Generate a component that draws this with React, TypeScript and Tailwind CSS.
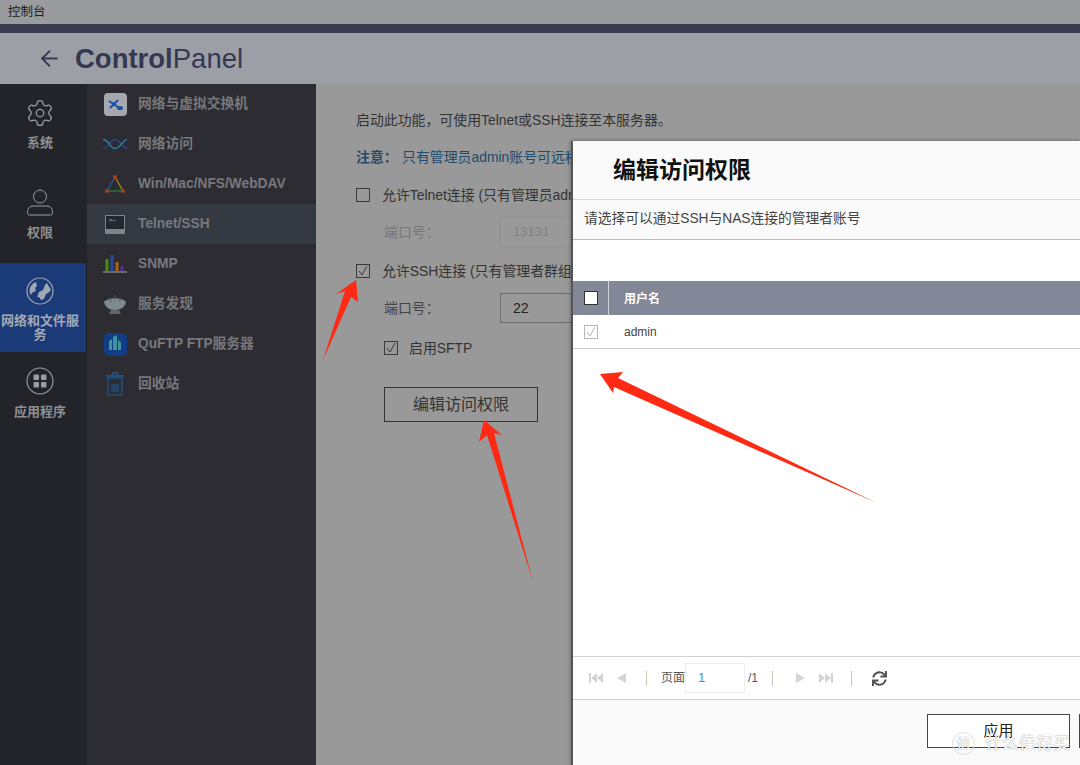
import { ArrowLeft, Settings } from 'lucide-react'
import { FaSync } from 'react-icons/fa'

const font = { fontFamily: '"Liberation Sans", "Noto Sans CJK SC", sans-serif' }

function SwitchIcon() {
  return (
    <div className="flex h-[23px] w-[23px] items-center justify-center rounded-[4px] bg-[#a5a9ae]">
      <svg width="19" height="19" viewBox="0 0 19 19">
        <path d="M3 6l9 6M4 13l8-8" stroke="#1c50a8" strokeWidth="2" />
        <circle cx="8" cy="9" r="2" fill="#1c50a8" />
        <ellipse cx="14" cy="13" rx="3" ry="2" fill="#1c50a8" />
      </svg>
    </div>
  )
}

function WaveIcon() {
  return (
    <svg width="24" height="12" viewBox="0 0 24 12" fill="none">
      <path d="M0 10.500C6 10.500 7 1.500 12 1.500S18 9 24 10.500" stroke="#31468c" strokeWidth="1.300" />
      <path d="M0 1.500C6 1.500 7 10.500 12 10.500S18 4 24 1" stroke="#2a8aa6" strokeWidth="1.300" />
    </svg>
  )
}

function TriangleIcon() {
  return (
    <svg width="22" height="20" viewBox="0 0 22 20" fill="none">
      <path d="M11 3L3 17" stroke="#1f5a9c" strokeWidth="1.400" />
      <path d="M11 3l8 14" stroke="#a8861c" strokeWidth="1.400" />
      <path d="M3 17h16" stroke="#1f7a34" strokeWidth="1.400" />
      <circle cx="11" cy="3" r="2" fill="#a8421c" />
      <circle cx="3" cy="17" r="2" fill="#a8421c" />
      <circle cx="19" cy="17" r="2" fill="#a8421c" />
    </svg>
  )
}

function TerminalIcon() {
  return (
    <div className="flex h-[19px] w-[20px] flex-col rounded-[1px] bg-[#7f848b] p-[1px]">
      <div className="flex h-[13px] items-start bg-[#24272e] px-[3px] text-[6px] leading-[8px] text-[#9a9ea4]">{'>–'}</div>
    </div>
  )
}

function BarsIcon() {
  return (
    <svg width="24" height="20" viewBox="0 0 24 20">
      <rect x="2.500" y="5" width="3" height="12" fill="#4d8a12" />
      <rect x="7.500" y="1" width="3" height="16" fill="#2a4aa0" />
      <rect x="12.500" y="8" width="3" height="9" fill="#a8660e" />
      <rect x="17.500" y="12" width="3" height="5" fill="#5a2a9a" />
      <rect x="0" y="17" width="24" height="2" fill="#686b70" />
    </svg>
  )
}

function DishIcon() {
  return (
    <svg width="24" height="22" viewBox="0 0 24 22">
      <path d="M1 9c4-5 18-5 22 0-1 5-5 8-11 8S2 14 1 9z" fill="#7f8a8c" />
      <path d="M12 2v5M6 5l2 4M18 5l-2 4" stroke="#555a60" strokeWidth="1" />
      <path d="M8 17h8l2 4H6z" fill="#60686c" />
    </svg>
  )
}

function FtpIcon() {
  return (
    <div className="flex h-[23px] w-[23px] items-center justify-center rounded-[5px] bg-[#123c84]">
      <svg width="18" height="20" viewBox="0 0 18 20">
        <path d="M3 7l3-2v11H3zM7 3l4-2v15H7zM12 6l3 2v8h-3z" fill="#3f94a0" />
      </svg>
    </div>
  )
}

function BinIcon() {
  return (
    <svg width="20" height="24" viewBox="0 0 20 24" fill="none">
      <path d="M1 4h18M7 3l1-2h4l1 2" stroke="#1d5c94" strokeWidth="1.400" />
      <path d="M3 6h14v17H3z" stroke="#1d5c94" strokeWidth="1.200" />
      <path d="M6 13h8M6 15h8M6 17h8M6 19h8" stroke="#1d5c94" strokeWidth="1" />
    </svg>
  )
}

function UserIcon() {
  return (
    <svg width="28" height="28" viewBox="0 0 28 28" fill="none" stroke="#9b9da0" strokeWidth="1">
      <circle cx="14" cy="7.500" r="6.500" />
      <path d="M7 17h14c3 0 5.500 2.500 5.500 5.500 0 3-.5 3.500-2 3.500H3.500c-1.500 0-2-.5-2-3.500C1.500 19.500 4 17 7 17z" />
    </svg>
  )
}

function GlobeIcon() {
  return (
    <svg width="28" height="28" viewBox="0 0 28 28">
      <circle cx="14" cy="14" r="13" fill="none" stroke="#9fa6b4" strokeWidth="1.200" />
      <path d="M5 18c-1.500-2-2-5-1-7 1-3 3-5 6-6l1 4-2 2 1 3-3 1z" fill="#9fa6b4" />
      <path d="M11 20l2-5 4-2 2-5 2-2 4 7-3 3-2 1-2 5-3 1-2-3z" fill="#9fa6b4" />
    </svg>
  )
}

function AppsIcon() {
  return (
    <svg width="28" height="28" viewBox="0 0 28 28">
      <circle cx="14" cy="14" r="13" fill="none" stroke="#9b9da0" strokeWidth="1.100" />
      <rect x="7.500" y="7.500" width="5.500" height="5.500" rx="1" fill="#9b9da0" />
      <rect x="15" y="7.500" width="5.500" height="5.500" rx="1" fill="#9b9da0" />
      <rect x="7.500" y="15" width="5.500" height="5.500" rx="1" fill="#9b9da0" />
      <rect x="15" y="15" width="5.500" height="5.500" rx="1" fill="#9b9da0" />
    </svg>
  )
}

function Check({ checked, color = '#3a3a3a' }: { checked?: boolean; color?: string }) {
  return (
    <svg width="14" height="14" viewBox="0 0 14 14" fill="none" className="shrink-0">
      <rect x="0.500" y="0.500" width="13" height="13" stroke={color} />
      {checked && <path d="M3 7l3 4 5-9" stroke={color} strokeWidth="1" />}
    </svg>
  )
}

const menu = [
  { icon: <SwitchIcon />, label: '网络与虚拟交换机' },
  { icon: <WaveIcon />, label: '网络访问' },
  { icon: <TriangleIcon />, label: 'Win/Mac/NFS/WebDAV' },
  { icon: <TerminalIcon />, label: 'Telnet/SSH', active: true },
  { icon: <BarsIcon />, label: 'SNMP' },
  { icon: <DishIcon />, label: '服务发现' },
  { icon: <FtpIcon />, label: 'QuFTP FTP服务器' },
  { icon: <BinIcon />, label: '回收站' },
]

function Pager() {
  const c = '#d4d4d4'
  return (
    <div className="flex h-[44px] shrink-0 items-center border-y border-[#d2d2d2] bg-white pl-[16px] text-[12px] text-[#555]">
      <svg width="14" height="12" viewBox="0 0 14 12" fill={c}>
        <rect x="0" y="1" width="2" height="10" />
        <path d="M8 1v10L2 6zM14 1v10L8 6z" />
      </svg>
      <svg width="10" height="12" viewBox="0 0 10 12" fill={c} className="ml-[13px]">
        <path d="M10 1v10L1 6z" />
      </svg>
      <div className="ml-[20px] h-[15px] w-px bg-[#c8c6bc]" />
      <span className="ml-[14px]">页面</span>
      <div className="flex h-[30px] w-[60px] items-center border border-[#ececec] pl-[12px] text-[13px] text-[#4a90d9]">1</div>
      <span className="ml-[3px]">/1</span>
      <div className="ml-[14px] h-[15px] w-px bg-[#c8c6bc]" />
      <svg width="10" height="12" viewBox="0 0 10 12" fill={c} className="ml-[23px]">
        <path d="M0 1v10l9-5z" />
      </svg>
      <svg width="14" height="12" viewBox="0 0 14 12" fill={c} className="ml-[13px]">
        <rect x="12" y="1" width="2" height="10" />
        <path d="M0 1v10l6-5zM6 1v10l6-5z" />
      </svg>
      <div className="ml-[18px] h-[15px] w-px bg-[#c8c6bc]" />
      <FaSync className="ml-[20px] text-[15px] text-[#555]" />
    </div>
  )
}

export default function App() {
  return (
    <div style={font} className="relative flex h-[765px] w-[1080px] flex-col overflow-hidden bg-[#999999]">
      <div className="flex h-6 items-center bg-[#999b9f] pl-[8px] text-[12.500px] text-[#222]">控制台</div>
      <div className="h-[9px] bg-[#393c4e]" />
      <div className="flex h-[51px] items-center bg-[#9c9fa6] pl-[37px] text-[#343850]">
        <ArrowLeft size={25} strokeWidth={1.800} />
        <div className="ml-[13px] pt-[1px] text-[27.500px] leading-none">
          <span className="font-bold">Control</span>
          <span>Panel</span>
        </div>
      </div>

      <div className="flex min-h-0 flex-1">
        <div className="flex w-[87px] shrink-0 flex-col bg-[#222429] pr-px text-[13px] font-bold text-[#8d8f92]">
          <div className="flex h-[90px] flex-col items-center pr-[6px] pt-[14px]">
            <Settings size={30} strokeWidth={1} className="text-[#9b9da0]" />
            <div className="mt-[5px]">系统</div>
          </div>
          <div className="flex h-[89px] flex-col items-center pr-[6px] pt-[15px]">
            <UserIcon />
            <div className="mt-[6px]">权限</div>
          </div>
          <div className="flex h-[89px] flex-col items-center bg-[#1b3a78] pr-[6px] pt-[14px] text-center leading-[14px] text-[#a3a9b5]">
            <GlobeIcon />
            <div className="mt-[9px] w-[80px]">网络和文件服务</div>
          </div>
          <div className="flex flex-col items-center pr-[6px] pt-[15px]">
            <AppsIcon />
            <div className="mt-[7px]">应用程序</div>
          </div>
        </div>

        <div className="flex w-[229px] shrink-0 flex-col bg-[#2c2c32] text-[13.750px] font-bold text-[#77787c]">
          {menu.map((item) => (
            <div key={item.label} className={`flex h-[40px] items-center ${item.active ? 'bg-[#343841]' : ''}`}>
              <div className="flex w-[51px] justify-center pl-[5px]">{item.icon}</div>
              <span className="whitespace-nowrap">{item.label}</span>
            </div>
          ))}
        </div>

        <div className="flex-1 overflow-hidden pl-[40px] pt-[26px] text-[13.900px] text-[#333]">
          <div className="whitespace-nowrap leading-[20px]">启动此功能，可使用Telnet或SSH连接至本服务器。</div>
          <div className="mt-[17px] flex whitespace-nowrap leading-[20px] text-[#1f4a6e]">
            <span className="w-[46px] font-bold">注意：</span>
            <span>只有管理员admin账号可远程登录。</span>
          </div>
          <div className="mt-[18px] flex items-center gap-[12px] whitespace-nowrap leading-[20px]">
            <Check />
            <span>允许Telnet连接 (只有管理员admin可以通过Telnet连接)</span>
          </div>
          <div className="mt-[12px] flex items-center pl-[28px] leading-[20px] text-[#777]">
            <span className="w-[116px]">端口号：</span>
            <div className="flex h-[30px] w-[150px] items-center border border-[#8f8f8f] pl-[12px] text-[13px] text-[#808080]">13131</div>
          </div>
          <div className="mt-[14px] flex items-center gap-[12px] whitespace-nowrap leading-[20px]">
            <Check checked />
            <span>允许SSH连接 (只有管理者群组可以通过SSH连接)</span>
          </div>
          <div className="mt-[12px] flex items-center pl-[28px] leading-[20px] text-[#444]">
            <span className="w-[116px]">端口号：</span>
            <div className="flex h-[30px] w-[150px] items-center border border-[#6f6f6f] pl-[12px] text-[14px] text-[#222]">22</div>
          </div>
          <div className="mt-[15px] flex items-center gap-[11px] pl-[28px] leading-[20px]">
            <Check checked />
            <span>启用SFTP</span>
          </div>
          <button className="ml-[28px] mt-[29px] h-[35px] w-[154px] border border-[#333] text-[16px] text-[#333]">编辑访问权限</button>
        </div>
      </div>

      <div className="absolute bottom-0 left-[571px] top-[141px] flex w-[509px] flex-col border-l-2 border-[#555] bg-white shadow-[0_0_4px_rgba(0,0,0,0.4)]">
        <div className="flex h-[59px] shrink-0 items-center border-b border-[#d8d8d8] bg-[#fafafa] pl-[40px] text-[23px] font-bold text-[#111]">编辑访问权限</div>
        <div className="flex h-[40px] shrink-0 items-center border-b border-[#bdbdbd] bg-[#fafafa] pl-[11px] text-[13.750px] text-[#444]">请选择可以通过SSH与NAS连接的管理者账号</div>
        <div className="h-[41px] shrink-0" />
        <div className="flex h-[34px] shrink-0 items-center bg-[#828898] text-[12px] font-bold text-white">
          <div className="flex h-full w-[36px] items-center justify-center border-r border-[#d0d3da] pl-[1px]">
            <div className="h-[14px] w-[14px] border border-[#333] bg-white" />
          </div>
          <span className="pl-[15px] pt-[1px]">用户名</span>
        </div>
        <div className="flex h-[34px] shrink-0 items-center border-b border-[#c8c8c8] text-[12px] text-[#444]">
          <div className="flex w-[36px] justify-center pr-[1px]">
            <Check checked color="#b5b5b5" />
          </div>
          <span className="pl-[15px]">admin</span>
        </div>
        <div className="flex-1" />
        <Pager />
        <div className="flex h-[65px] shrink-0 items-start bg-[#fafafa] pl-[354px] pt-[14px]">
          <button className="h-[34px] w-[143px] shrink-0 border border-[#444] bg-white text-[15px] text-[#222]">应用</button>
          <div className="ml-[9px] h-[34px] w-[10px] shrink-0 border border-[#444] bg-white" />
        </div>
      </div>

      <div className="absolute left-[952px] top-[731px] flex items-center gap-[10px] whitespace-nowrap text-white [text-shadow:0_0_1px_#777]">
        <div className="flex h-[23px] w-[23px] items-center justify-center rounded-full border border-[#ddd] text-[14px]">值</div>
        <span className="text-[17px]">什么值得买</span>
      </div>

      <svg className="pointer-events-none absolute inset-0" width="1080" height="765" viewBox="0 0 1080 765" fill="#ff2a14">
        <path d="M356 280L336 294L345 291L323 360L351 297L358 302Z" />
        <path d="M484 420L479 442L487 435L533 582L494 433L502 435Z" />
        <path d="M600 374L623 372L618 378L877 503L614 387L613 393Z" />
      </svg>
    </div>
  )
}
